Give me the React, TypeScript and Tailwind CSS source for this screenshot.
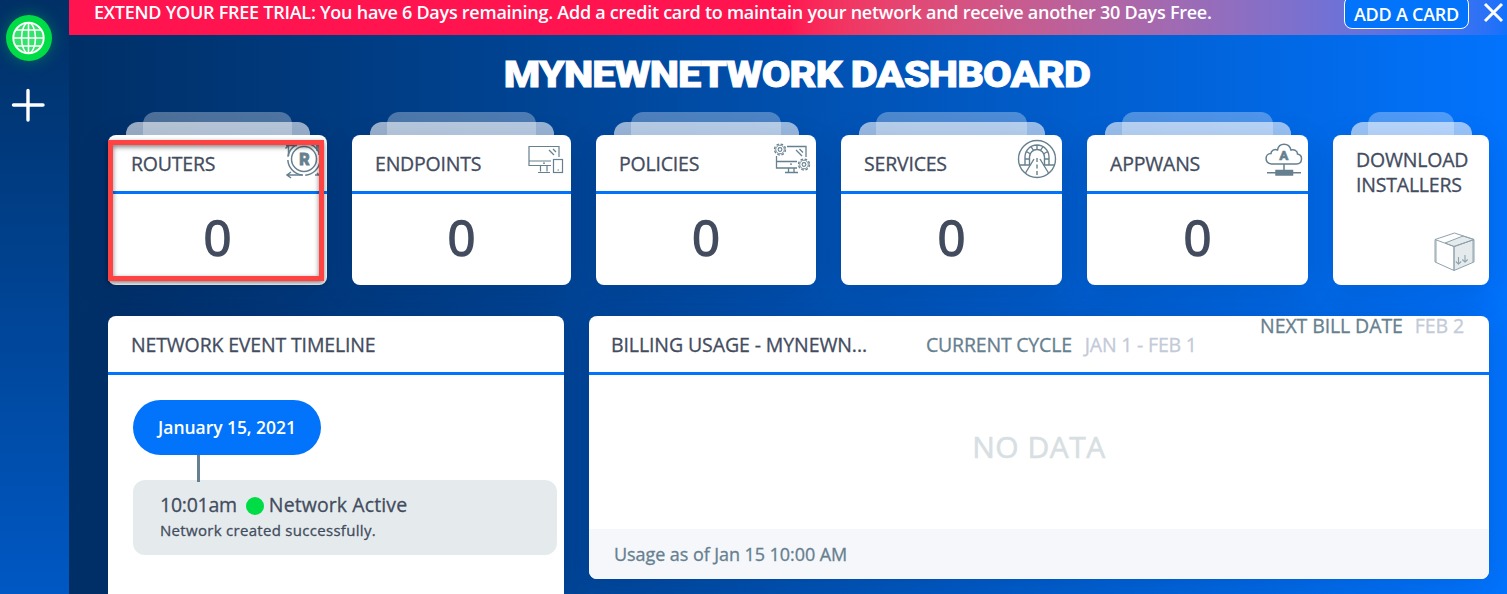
import React from "react";

type IconProps = { className?: string };

function GlobeIcon() {
  return (
    <svg width="34" height="34" viewBox="0 0 34 34" fill="none" stroke="#fff" strokeWidth="1.6">
      <circle cx="16.500" cy="17" r="15.2" fill="#ffffff33" strokeWidth="1.9" />
      <ellipse cx="16.500" cy="17" rx="7" ry="15.2" />
      <path d="M16.500 1.8v30.4M1.3 17h30.4M4 9h25M4 25h25" />
    </svg>
  );
}

function RouterIcon({ className }: IconProps) {
  return (
    <svg className={className} width="38" height="38" viewBox="0 0 38 38" fill="none" stroke="#66808f" strokeWidth="1.5">
      <circle cx="20" cy="18" r="12.500" />
      <circle cx="20" cy="18" r="16.2" strokeDasharray="22 3.450" strokeDashoffset="-2" />
      <path d="M2 4.5h11M4.5 3v12M4.500 4.5l-3 3M35 3v11M33 3v7M3 34h16M7 31l-4 3 4 3M33 32l3 3M31 34h5" />
      <text x="20.500" y="23.500" textAnchor="middle" fontFamily="Roboto, sans-serif" fontWeight="900" fontSize="16" fill="#66808f" stroke="#66808f" strokeWidth=".8">R</text>
    </svg>
  );
}

function EndpointIcon({ className }: IconProps) {
  return (
    <svg className={className} width="36" height="30" viewBox="0 0 36 30" fill="none" stroke="#66808f" strokeWidth="1.2">
      <path d="M31 12V1.500H1v19h22M1 16h22M12.500 20.500v6M19 20.500v6M10 27.500h12" />
      <path d="M21 5l5 5M25 4l3 3M15 18.200h2" strokeWidth="1.300" />
      <rect x="25.500" y="14.500" width="9" height="13" />
      <path d="M29.500 25h1.500" />
    </svg>
  );
}

function Gear({ cx, cy }: { cx: number; cy: number }) {
  return (
    <g>
      <circle cx={cx} cy={cy} r="5.500" strokeWidth="1.300" strokeDasharray="2.600 1.720" />
      <circle cx={cx} cy={cy} r="4.300" strokeWidth=".9" />
      <circle cx={cx} cy={cy} r="1.900" strokeWidth="1.100" />
    </g>
  );
}

function PolicyIcon({ className }: IconProps) {
  return (
    <svg className={className} width="38" height="32" viewBox="0 0 38 32" fill="none" stroke="#66808f" strokeWidth="1.300">
      <path d="M14 3.500h19V14M3.500 13v12H24M3.500 18.500H24M15.500 25v5M21 25v5M12 29.500h13M23 7l6 6M26.500 6l3.500 3.500M17 21.200h2" />
      <Gear cx={7} cy={6.5} />
      <Gear cx={31} cy={21.5} />
    </svg>
  );
}

function ServiceIcon({ className }: IconProps) {
  return (
    <svg className={className} width="40" height="40" viewBox="0 0 40 40" fill="none" stroke="#66808f" strokeWidth="1.400">
      <circle cx="20" cy="20" r="18.500" />
      <path d="M8 26V18a12 12 0 0 1 24 0v8M12.500 26v-8a7.500 7.500 0 0 1 15 0v8M2.500 26h11M26.500 26h11M8 20h4.500M27.500 20H32M9.500 12.500l4 2.500M14 7.500l2.500 4M20 6v4.500M26 7.500l-2.500 4M30.500 12.500l-4 2.500" />
      <path d="M17 20L8.500 34M23 20l8.500 14" />
      <path d="M20 19v19" strokeDasharray="4 2.500" />
    </svg>
  );
}

function AppwanIcon({ className }: IconProps) {
  return (
    <svg className={className} width="38" height="34" viewBox="0 0 38 34" fill="none" stroke="#66808f" strokeWidth="1.500">
      <path d="M6.500 21C-1 20-.3 10.500 6 10.500 6 7.500 9.500 5.500 12.500 7 14 -.6 24 -.6 26 7c3-1 6.500.5 6.500 4 5.500 1 5.500 9.500-1 10Z" />
      <path d="M19 21v7M2 29.800h34" />
      <rect x="11" y="27.500" width="16.500" height="4.500" fill="#66808f" />
      <text x="18.800" y="17" textAnchor="middle" fontFamily="Roboto, sans-serif" fontWeight="900" fontSize="13.500" fill="#66808f" stroke="#66808f" strokeWidth=".4">A</text>
    </svg>
  );
}

function BoxIcon({ className }: IconProps) {
  return (
    <svg className={className} width="42" height="40" viewBox="0 0 42 40" fill="none" stroke="#8fa2ad" strokeWidth="1" strokeLinejoin="round">
      <path d="M20 14.500l20-7V30l-20 8.500z" fill="#e5ebed" />
      <path d="M11 11l18-7 11 3.500-20 7z" fill="#e5ebed" />
      <path d="M1 7.500L20.500 1 40 7.500 20 14.500zM1 7.500V30l19 8.500v-24M2 8v22M39 8v22" />
      <path d="M24.500 25v7M21.800 29.500l2.700 2.700 2.700-2.700M31 23v7M28.300 27.500L31 30.200l2.700-2.700" strokeWidth="1.100" />
    </svg>
  );
}

function Stack({ width, children }: { width: string; children: React.ReactNode }) {
  return (
    <div className={`relative pt-[23px] ${width}`}>
      <div className="absolute inset-x-[35px] top-0 h-[23px] rounded-t-xl bg-white/30" />
      <div className="absolute left-[18px] right-[17px] top-[10px] h-[13px] rounded-t-xl bg-white/60" />
      <div className="relative h-[150px] rounded-lg bg-white shadow-[0_8px_30px_rgba(0,30,80,0.15)]">{children}</div>
    </div>
  );
}

function StatCard({ width, label, icon, iconPos }: { width: string; label: string; icon: React.ReactNode; iconPos: string }) {
  return (
    <Stack width={width}>
      <div className="flex h-[59px] items-center border-b-[3px] border-[#0273fb] pl-[23px] pt-px">
        <span className="text-[19.500px] tracking-[-0.2px] [-webkit-text-stroke:0.3px]">{label}</span>
      </div>
      <div className="flex h-[88px] items-center justify-center pb-px text-[49px] font-medium [-webkit-text-stroke:1.5px]">0</div>
      <div className={`absolute ${iconPos}`}>{icon}</div>
    </Stack>
  );
}

export default function App() {
  return (
    <div className="flex h-[594px] w-[1507px] overflow-hidden font-['Open_Sans',sans-serif] text-[#434c5e]">
      <aside className="flex w-[69px] shrink-0 flex-col items-center bg-linear-to-b from-[#003066] to-[#0058c4] pr-[11px] pt-[15px]">
        <div className="flex size-[46px] items-center justify-center rounded-full bg-[#00dc46] shadow-[0_0_16px_rgba(0,220,70,0.35)]">
          <GlobeIcon />
        </div>
        <svg className="mr-[2px] mt-[27px]" width="34" height="34" viewBox="0 0 34 34" stroke="#fff" strokeWidth="3.400" strokeLinecap="round">
          <path d="M17 2.500v29.500M2.500 17h29.500" />
        </svg>
      </aside>
      <main className="flex min-w-0 flex-1 flex-col bg-linear-to-r from-[#002f66] to-[#0273fd]">
        <div className="flex h-[35px] shrink-0 items-start bg-linear-to-r from-[#ff1450] from-50% to-[#1271fb] pl-[25px] font-semibold text-white">
          <div className="-mt-px whitespace-nowrap text-[18px] leading-[26px] tracking-[-0.255px]">
            EXTEND YOUR FREE TRIAL: You have 6 Days remaining. Add a credit card to maintain your network and receive another 30 Days Free.
          </div>
          <button className="-mt-1 ml-auto h-[33px] w-[125px] rounded-lg border border-white bg-[#0273fb] pt-[3px] text-[18px] leading-6 tracking-[-0.25px]">ADD A CARD</button>
          <svg className="ml-[14px] mr-[3px] mt-[2px]" width="21" height="21" viewBox="0 0 21 21" stroke="#fff" strokeWidth="3">
            <path d="M2 2l17 17M19 2L2 19" />
          </svg>
        </div>
        <h1 className="h-[77px] origin-center scale-x-[1.11] pl-[16px] pt-[16px] text-center font-[Roboto] text-[37.500px] font-black leading-[46px] tracking-[-0.85px] text-white [-webkit-text-stroke:0.8px]">MYNEWNETWORK DASHBOARD</h1>
        <section className="flex shrink-0 gap-[25px] pl-[39px]">
          <div className="relative">
            <StatCard width="w-[219px]" label="ROUTERS" iconPos="right-[5px] top-[6px]" icon={<RouterIcon />} />
            <div className="absolute left-0 top-[28px] h-[141px] w-[216px] border-[5px] border-[#ff4343] shadow-[0_2px_5px_rgba(0,0,0,0.5),inset_0_2px_5px_rgba(0,0,0,0.5)]" />
          </div>
          <StatCard width="w-[219px]" label="ENDPOINTS" iconPos="right-[7px] top-[10px]" icon={<EndpointIcon />} />
          <StatCard width="w-[220px]" label="POLICIES" iconPos="right-[5px] top-[8px]" icon={<PolicyIcon />} />
          <StatCard width="w-[221px]" label="SERVICES" iconPos="right-[5px] top-[4px]" icon={<ServiceIcon />} />
          <StatCard width="w-[221px]" label="APPWANS" iconPos="right-[5px] top-[8px]" icon={<AppwanIcon />} />
          <Stack width="w-[156px]">
            <div className="pl-[23px] pt-[12px] text-[19.500px] leading-[25px] tracking-[-0.2px] [-webkit-text-stroke:0.3px]">DOWNLOAD<br />INSTALLERS</div>
            <BoxIcon className="absolute bottom-[13px] right-[13px]" />
          </Stack>
        </section>
        <section className="mt-[31px] flex min-h-0 flex-1 items-start gap-[25px] pl-[39px]">
          <div className="h-full w-[456px] rounded-t-lg bg-white shadow-[0_0_30px_rgba(0,30,80,0.15)]">
            <div className="flex h-[59px] items-center border-b-[3px] border-[#0273fb] pl-[23px] pt-px text-[19.500px] tracking-[-0.16px] [-webkit-text-stroke:0.3px]">NETWORK EVENT TIMELINE</div>
            <div className="flex flex-col items-start pl-[25px] pt-[25px]">
              <div className="flex h-[55px] w-[188px] items-center justify-center rounded-full bg-[#0273fb] pb-px text-[17.500px] font-semibold tracking-[-0.05px] text-white">January 15, 2021</div>
              <div className="relative z-10 -mb-[2px] ml-[64px] h-[27px] w-[3px] bg-[#66808f]" />
              <div className="h-[75px] w-[424px] rounded-xl bg-[#e5ebed] pl-[27px] pt-[12px]">
                <div className="flex items-center text-[19.500px] font-medium leading-[26px] [-webkit-text-stroke:0.3px]">
                  <span className="tracking-[-0.25px]">10:01am</span>
                  <span className="ml-[9px] mr-[5px] mt-[2px] size-[18px] rounded-full bg-[#00dc46]" />
                  <span className="tracking-[0.1px]">Network Active</span>
                </div>
                <div className="text-[15px] font-medium leading-[25px] tracking-[0.3px] [-webkit-text-stroke:0.3px]">Network created successfully.</div>
              </div>
            </div>
          </div>
          <div className="flex h-[263px] w-[900px] flex-col rounded-lg bg-white shadow-[0_0_30px_rgba(0,30,80,0.15)]">
            <div className="flex h-[59px] shrink-0 border-b-[3px] border-[#0273fb] text-[19.500px] leading-[58px] tracking-[-0.1px] [-webkit-text-stroke:0.3px]">
              <div className="w-[337px] whitespace-nowrap pl-[22px]">BILLING USAGE - MYNEWN...</div>
              <div className="whitespace-nowrap tracking-[-0.2px] text-[#66808f]">CURRENT CYCLE<span className="ml-[13px] text-[#c3cad8]">JAN 1 - FEB 1</span></div>
              <div className="ml-auto whitespace-nowrap pr-[25px] leading-[20px] text-[#66808f]">NEXT BILL DATE<span className="ml-[12px] text-[#c3cad8]">FEB 2</span></div>
            </div>
            <div className="flex flex-1 items-center justify-center pb-[11px] text-[30px] font-medium tracking-[0.5px] text-[#d8dfe3] [-webkit-text-stroke:0.6px]">NO DATA</div>
            <div className="flex h-[50px] items-center rounded-b-lg bg-[#f5f7fb] pl-[25px] text-[18px] tracking-[-0.07px] text-[#66808f] [-webkit-text-stroke:0.3px]">Usage as of Jan 15 10:00 AM</div>
          </div>
        </section>
      </main>
    </div>
  );
}
